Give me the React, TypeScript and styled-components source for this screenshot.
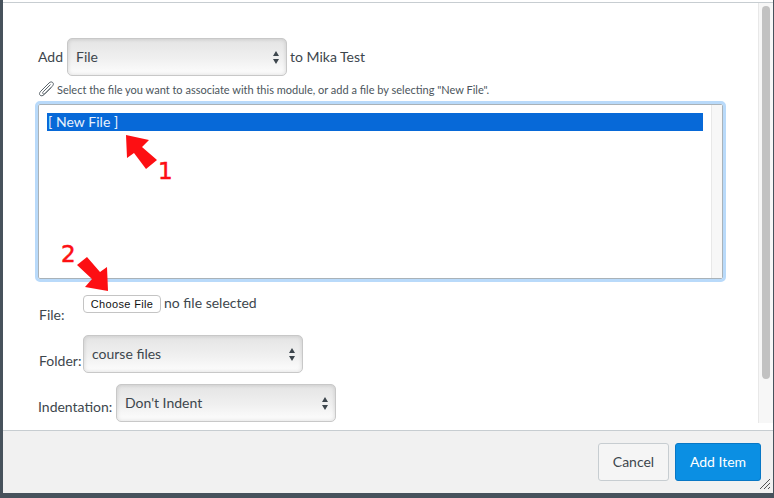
import styled, { createGlobalStyle } from "styled-components"

const GlobalStyle = createGlobalStyle`
  html, body {
    margin: 0;
    padding: 0;
    background: #47525c;
    overflow: hidden;
  }
  * {
    box-sizing: border-box;
  }
`

const Frame = styled.div`
  position: relative;
  width: 774px;
  height: 498px;
  padding: 0 1px 5px 3px;
  background: #47525c;
  font-family: Lato, "Open Sans", sans-serif;
  color: #3d464d;
`

const Dialog = styled.div`
  display: flex;
  flex-direction: column;
  height: 100%;
  background: #fff;
  border-top: 3px solid #fff;
`

const TopRule = styled.div`
  height: 1px;
  margin-top: -1px;
  background: #c7cdd1;
`

const Body = styled.div`
  display: flex;
  flex: 1;
  min-height: 0;
`

const Content = styled.div`
  flex: 1;
  padding: 35px 32px 0 32px;
`

const Track = styled.div`
  width: 15px;
  margin-bottom: 7px;
  padding: 3px 3px 0 3px;
  background: #f7f7f7;
  border-left: 1px solid #e8e8e8;
`

const Thumb = styled.div`
  height: 373px;
  border-radius: 4px;
  background: #c2c2c2;
`

const Row = styled.div<{ $mt?: number; $h?: number }>`
  display: flex;
  align-items: flex-end;
  height: ${(p) => (p.$h ? `${p.$h}px` : "auto")};
  margin-top: ${(p) => p.$mt ?? 0}px;
  font-size: 14px;
  line-height: 20px;
`

const AddRow = styled(Row)`
  align-items: center;
  padding-left: 3px;
  gap: 3px;
`

const AddLabel = styled.span`
  margin-right: 1px;
`

const SelectBox = styled.div<{ $w: number }>`
  position: relative;
  display: flex;
  align-items: center;
  width: ${(p) => p.$w}px;
  height: 38px;
  padding: 0 8px;
  border: 1px solid #c8c8c8;
  border-radius: 5px;
  background: linear-gradient(#e4e4e4, #f0f0f0 55%, #fdfdfd);
  box-shadow: inset 0 0 4px rgba(0, 0, 0, 0.14);
  font-size: 14px;
`

const Caret = styled.svg`
  position: absolute;
  right: 7px;
  top: 12px;
  width: 6px;
  height: 13px;
  fill: #3d464d;
`

const Hint = styled.div`
  display: flex;
  align-items: center;
  height: 16px;
  margin-top: 5px;
  padding-left: 3px;
  gap: 2px;
  font-size: 11px;
  color: #4b555c;
`

const Clip = styled.svg`
  width: 17px;
  height: 16px;
  fill: none;
  stroke: #5b656c;
  stroke-width: 1;
`

const ListFrame = styled.div`
  display: flex;
  height: 181px;
  margin-top: 4px;
  border: 3px solid #b9dafa;
  border-radius: 5px;
  background: #fff;
  box-shadow: inset 0 0 0 1px #a9b2b8;
`

const ListInner = styled.div`
  flex: 1;
  padding: 9px 8px 0 9px;
`

const ListItem = styled.div`
  height: 18px;
  padding-left: 1px;
  background: #0769d8;
  color: #e8f1fc;
  font-size: 14px;
  letter-spacing: 0.05px;
  line-height: 18px;
`

const ListTrack = styled.div`
  width: 11px;
  margin: 1px 1px 1px 0;
  background: #f7f7f7;
  border-left: 1px solid #e8e8e8;
`

const FieldLabel = styled.label<{ $w: number; $pl?: number; $pb?: number }>`
  width: ${(p) => p.$w}px;
  padding-left: ${(p) => p.$pl ?? 4}px;
  padding-bottom: ${(p) => p.$pb ?? 3}px;
  font-size: 14px;
  white-space: nowrap;
`

const FileControl = styled.div`
  display: flex;
  align-items: center;
  gap: 3px;
  align-self: flex-start;
  height: 18px;
  font-size: 14px;
`

const FileName = styled.span`
  margin-top: -2px;
`

const ChooseButton = styled.button`
  width: 78px;
  height: 18px;
  padding: 0;
  border: 1px solid #c4c4c4;
  border-radius: 4px;
  background: #fff;
  color: #111;
  font-family: "Liberation Sans", Arial, sans-serif;
  font-size: 11px;
  letter-spacing: 0.35px;
  line-height: 16px;
`

const Footer = styled.div`
  display: flex;
  justify-content: flex-end;
  align-items: center;
  gap: 6px;
  height: 63px;
  padding-right: 12px;
  border-top: 1px solid #c7cdd1;
  background: #f1f1f1;
`

const Button = styled.button<{ $primary?: boolean }>`
  width: ${(p) => (p.$primary ? 86 : 71)}px;
  height: 38px;
  padding: 0 0 2px;
  border: 1px solid ${(p) => (p.$primary ? "#0877c5" : "#c7cdd1")};
  border-radius: 3px;
  background: ${(p) => (p.$primary ? "#0b8fe3" : "#f5f5f5")};
  color: ${(p) => (p.$primary ? "#fff" : "#3d464d")};
  font-family: Lato, sans-serif;
  font-size: 14px;
`

const Grip = styled.svg`
  position: absolute;
  right: 3px;
  bottom: 8px;
  width: 12px;
  height: 12px;
  stroke: #555;
  stroke-width: 1;
`

const Arrow = styled.svg<{ $x: number; $y: number }>`
  position: absolute;
  left: ${(p) => p.$x}px;
  top: ${(p) => p.$y}px;
  width: 36px;
  height: 36px;
  fill: #fd0f13;
`

const Mark = styled.span<{ $x: number; $y: number }>`
  position: absolute;
  left: ${(p) => p.$x}px;
  top: ${(p) => p.$y}px;
  color: #fd0f13;
  font-family: "DejaVu Sans", sans-serif;
  font-size: 23px;
  line-height: 26px;
  -webkit-text-stroke: 0.5px #fd0f13;
`

const Select = ({ value, width }: { value: string; width: number }) => (
  <SelectBox $w={width}>
    {value}
    <Caret viewBox="0 0 6 13">
      <path d="M3 0 L6 5 H0 Z M0 8 H6 L3 13 Z" />
    </Caret>
  </SelectBox>
)

const App = () => {
  return (
    <Frame>
      <GlobalStyle />
      <Dialog>
        <TopRule />
        <Body>
          <Content>
            <AddRow>
              <AddLabel>Add</AddLabel>
              <Select value="File" width={220} />
              to Mika Test
            </AddRow>
            <Hint>
              <Clip viewBox="0 0 17 16">
                <path d="M12.5 3.5 5.2 10.8c-.7.7-.7 1.5-.2 2s1.3.4 2-.3l7.3-7.3c1.3-1.3 1.4-2.8.4-3.7s-2.4-.8-3.7.5L2.8 10.2c-1.5 1.5-1.7 3-.7 4s2.6.8 4.1-.7l7-7" />
              </Clip>
              Select the file you want to associate with this module, or add a file by selecting "New File".
            </Hint>
            <ListFrame>
              <ListInner>
                <ListItem>[ New File ]</ListItem>
              </ListInner>
              <ListTrack />
            </ListFrame>
            <Row $mt={13} $h={30}>
              <FieldLabel $w={48} $pb={0}>File:</FieldLabel>
              <FileControl>
                <ChooseButton>Choose File</ChooseButton>
                <FileName>no file selected</FileName>
              </FileControl>
            </Row>
            <Row $mt={10}>
              <FieldLabel $w={48} $pb={2}>Folder:</FieldLabel>
              <Select value="course files" width={220} />
            </Row>
            <Row $mt={11}>
              <FieldLabel $w={81} $pl={3} $pb={5}>Indentation:</FieldLabel>
              <Select value="Don't Indent" width={220} />
            </Row>
          </Content>
          <Track>
            <Thumb />
          </Track>
        </Body>
        <Footer>
          <Button>Cancel</Button>
          <Button $primary>Add Item</Button>
        </Footer>
      </Dialog>
      <Grip viewBox="0 0 12 12">
        <path d="M1 11 11 1M5 11 11 5M9 11 11 9" />
      </Grip>
      <Arrow $x={122} $y={134} viewBox="0 0 36 36">
        <path d="M4 1 L27 6 L20 13 L35 26 L24 35 L12 19 L5 24 Z" />
      </Arrow>
      <Mark $x={158} $y={158}>1</Mark>
      <Arrow $x={77} $y={256} viewBox="0 0 36 36">
        <path d="M0 9 L10 1 L23 16 L30 11 L31 35 L8 31 L15 23 Z" />
      </Arrow>
      <Mark $x={61} $y={241}>2</Mark>
    </Frame>
  )
}

export default App
